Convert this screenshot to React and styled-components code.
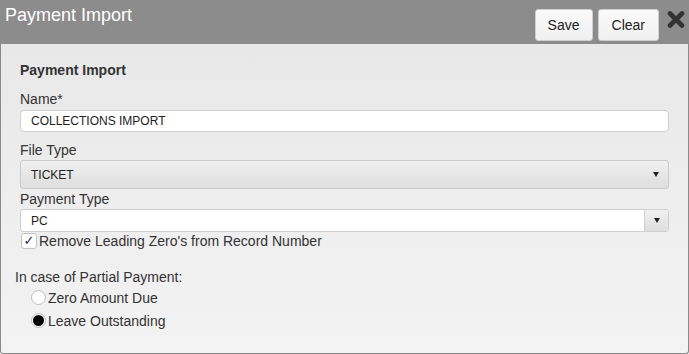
import React from 'react';
import styled, { createGlobalStyle } from 'styled-components';

const GlobalStyle = createGlobalStyle`
  body {
    margin: 0;
    font-family: "Liberation Sans", Arial, sans-serif;
    color: #333;
  }
`;

const Dialog = styled.div`
  width: 689px;
  height: 354px;
  display: flex;
  flex-direction: column;
`;

const Header = styled.header`
  height: 44px;
  flex-shrink: 0;
  background: #8c8c8c;
  display: flex;
  align-items: flex-start;
  padding: 0 4px 0 5px;
  box-sizing: border-box;

  h1 {
    margin: 0;
    padding-top: 5px;
    flex-grow: 1;
    font-size: 18px;
    font-weight: normal;
    color: #fff;
  }
`;

const Actions = styled.div`
  display: flex;
  gap: 5px;
  margin-top: 9px;
  align-items: flex-start;
`;

const Button = styled.button`
  height: 32px;
  padding: 0 ${(p) => p.$pad || 13}px;
  font-family: inherit;
  font-size: 14px;
  color: #222;
  background: linear-gradient(#fbfbfb, #f0f0f0);
  border: 1px solid #cfcfcf;
  border-radius: 3px;
  cursor: pointer;
`;

const Close = styled.svg`
  width: 18px;
  height: 17px;
  margin: 2px 0 0 3px;
`;

const Body = styled.section`
  flex-grow: 1;
  background: linear-gradient(#e8e8e8, #f3f3f3);
  border: 1px solid #8a8a8a;
  border-top: 0;
  border-radius: 0 0 3px 3px;
  padding: 16px 19px 0 19px;
  font-size: 14px;
  line-height: 20px;

  h2 {
    margin: 0 0 9px;
    font-size: 14px;
    font-weight: bold;
    color: #333;
  }
`;

const Label = styled.div`
  color: #333;
  margin-top: ${(p) => p.$gap || 0}px;
  margin-left: ${(p) => p.$indent || 0}px;
`;

const TextBox = styled.div`
  height: 20px;
  background: #fff;
  border: 1px solid #cfcfcf;
  border-radius: 4px;
  display: flex;
  align-items: center;
  padding-left: 10px;
  font-size: 12px;
  color: #222;
  margin-top: 1px;
`;

const Arrow = styled.i`
  width: 0;
  height: 0;
  border-left: 3.5px solid transparent;
  border-right: 3.5px solid transparent;
  border-top: 5px solid #222;
`;

const Select = styled.div`
  height: 27px;
  background: linear-gradient(#f0f0f0, #dedede);
  border: 1px solid #cacaca;
  border-radius: 3px;
  display: flex;
  align-items: center;
  justify-content: space-between;
  padding: 0 9px 0 10px;
  font-size: 12px;
  color: #222;
`;

const Combo = styled.div`
  height: 21px;
  background: #fff;
  border: 1px solid #cfcfcf;
  border-radius: 3px;
  display: flex;
  font-size: 12px;
  color: #222;
  overflow: hidden;

  span {
    flex-grow: 1;
    display: flex;
    align-items: center;
    padding-left: 10px;
  }
`;

const ComboButton = styled.div`
  width: 23px;
  border-left: 1px solid #cfcfcf;
  background: linear-gradient(#f0f0f0, #dedede);
  display: flex;
  align-items: center;
  justify-content: center;
`;

const CheckRow = styled.label`
  display: flex;
  align-items: center;
  gap: 2px;
  height: 17px;
  margin-left: 1px;
`;

const CheckBox = styled.span`
  width: 14px;
  height: 14px;
  border: 1px solid #c4c4c4;
  border-radius: 3px;
  background: #fff;
  display: flex;
  align-items: center;
  justify-content: center;
  font-family: "DejaVu Sans", sans-serif;
  font-size: 13px;
  line-height: 14px;
  color: #1c2a4a;
`;

const RadioRow = styled.label`
  display: flex;
  align-items: center;
  gap: 2px;
  height: 15px;
  margin: ${(p) => p.$top}px 0 0 11px;
`;

const Radio = styled.span`
  width: 13px;
  height: 13px;
  border: 1px solid #bdbdbd;
  border-radius: 50%;
  background: #fff;
  display: flex;
  align-items: center;
  justify-content: center;

  &::after {
    content: '';
    width: 11px;
    height: 11px;
    border-radius: 50%;
    background: ${(p) => (p.$on ? '#000' : 'transparent')};
  }
`;

const App = () => {
  return (
    <Dialog>
      <GlobalStyle />
      <Header>
        <h1>Payment Import</h1>
        <Actions>
          <Button type="button" $pad={12}>Save</Button>
          <Button type="button">Clear</Button>
          <Close viewBox="0 0 18 17">
            <path
              d="M3 2.5 L15 14.5 M15 2.5 L3 14.5"
              stroke="#333"
              strokeWidth="4.6"
              strokeLinecap="round"
            />
          </Close>
        </Actions>
      </Header>
      <Body>
        <h2>Payment Import</h2>
        <Label>Name*</Label>
        <TextBox>COLLECTIONS IMPORT</TextBox>
        <Label $gap={8}>File Type</Label>
        <Select>
          TICKET
          <Arrow />
        </Select>
        <Label>Payment Type</Label>
        <Combo>
          <span>PC</span>
          <ComboButton>
            <Arrow />
          </ComboButton>
        </Combo>
        <CheckRow>
          <CheckBox>✓</CheckBox>
          Remove Leading Zero's from Record Number
        </CheckRow>
        <Label $gap={18} $indent={-5}>In case of Partial Payment:</Label>
        <RadioRow $top={3}>
          <Radio />
          Zero Amount Due
        </RadioRow>
        <RadioRow $top={8}>
          <Radio $on />
          Leave Outstanding
        </RadioRow>
      </Body>
    </Dialog>
  );
};

export default App;
